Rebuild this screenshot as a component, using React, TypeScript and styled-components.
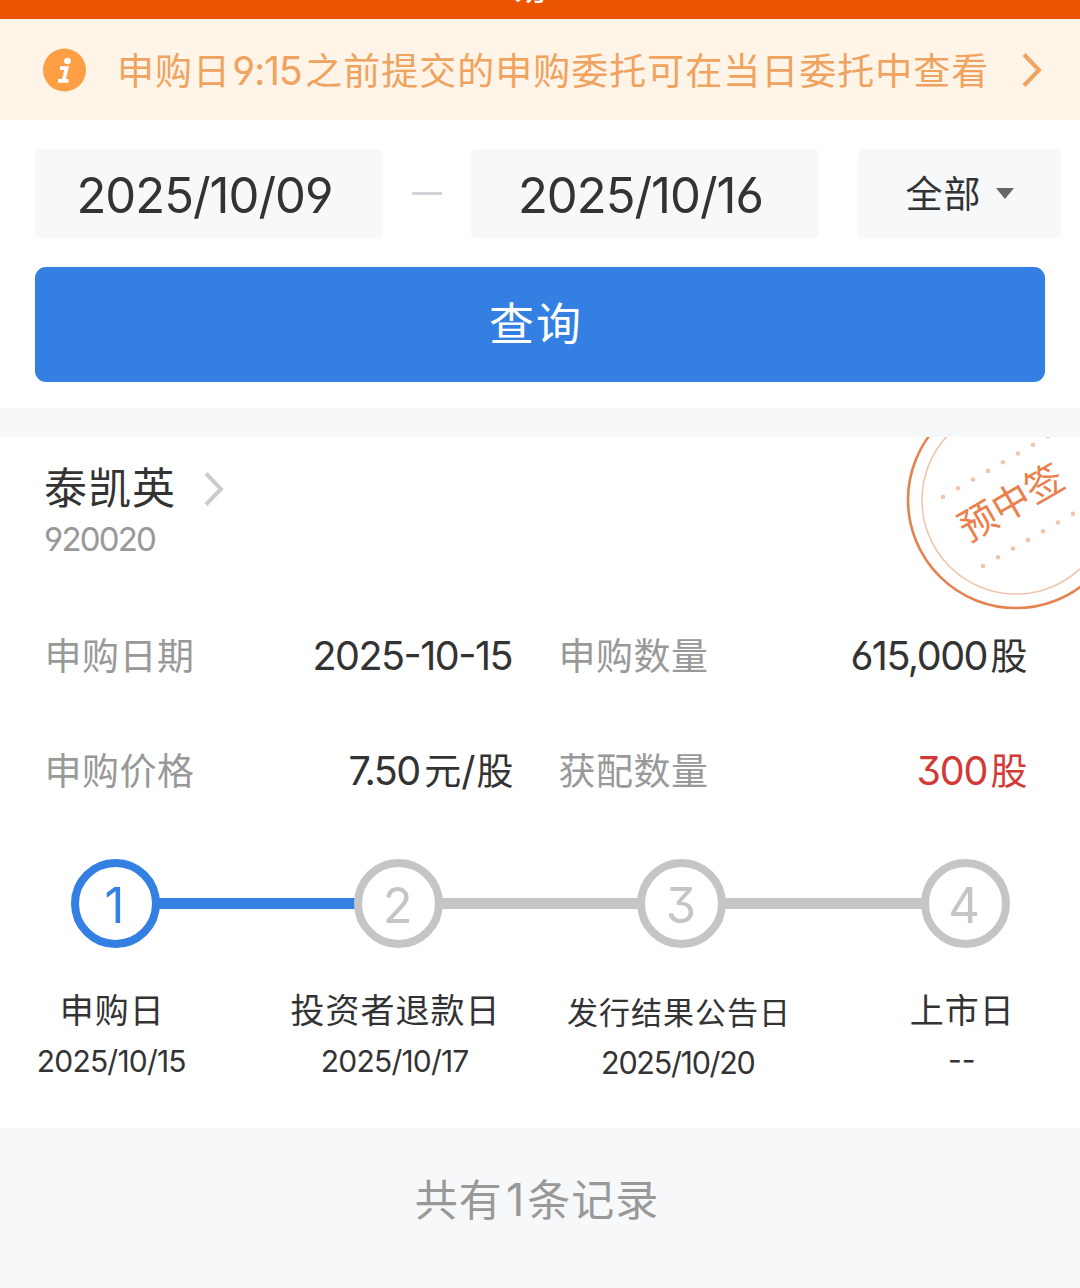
import React from 'react';
import styled, { createGlobalStyle } from 'styled-components';

const Global = createGlobalStyle`
  * { box-sizing: border-box; }
  body { margin: 0; background: #fff; }
`;

const Page = styled.main`
  width: 1080px;
  height: 1288px;
  overflow: hidden;
  display: flex;
  flex-direction: column;
  background: #f7f8fa;
  color: #333;
  font-family: Inter, 'Noto Sans CJK SC', sans-serif;
  font-feature-settings: 'cv03', 'cv04', 'cv09';
  white-space: nowrap;
`;

const Label = styled.span<{ $size: number; $gap?: number; $color?: string }>`
  font-size: ${p => p.$size}px;
  letter-spacing: ${p => p.$gap ?? 1}px;
  margin-right: ${p => -(p.$gap ?? 1)}px;
  line-height: 1.4;
  color: ${p => p.$color ?? 'inherit'};
`;

const Digits = styled.span<{ $size: number; $gap?: number; $color?: string; $after?: number; $case?: boolean }>`
  font-size: ${p => p.$size}px;
  letter-spacing: ${p => p.$gap ?? -1.7}px;
  margin-right: ${p => (p.$after ?? 0) - (p.$gap ?? -1.7)}px;
  line-height: 1.2;
  color: ${p => p.$color ?? 'inherit'};
  ${p => p.$case && "font-feature-settings: 'cv03', 'cv04', 'cv09', 'case';"}
`;

const TitleBar = styled.header`
  height: 19px;
  flex: none;
  display: flex;
  justify-content: center;
  align-items: flex-start;
  padding-right: 20px;
  overflow: hidden;
  background: #eb5500;
  color: #fff;
`;

const Title = styled.span`
  margin-top: -34px;
  font-size: 38px;
  line-height: 38px;
`;

const Banner = styled.section`
  height: 101px;
  flex: none;
  display: flex;
  align-items: center;
  padding: 0 38px 0 43px;
  background: #fff4e8;
  color: #f0a35e;
`;

const BannerText = styled.div`
  flex: 1;
  display: flex;
  align-items: baseline;
  margin-left: 31px;
  padding-top: 5px;
`;

const Filters = styled.section`
  height: 288px;
  flex: none;
  padding: 29px 19px 0 35px;
  background: #fff;
`;

const FilterRow = styled.div`
  display: flex;
  align-items: center;
`;

const Field = styled.button<{ $width: number }>`
  width: ${p => p.$width}px;
  height: 89px;
  padding: 3px 0 0;
  border: 0;
  border-radius: 5px;
  background: #f7f8fa;
  color: #333;
  font: inherit;
  font-feature-settings: inherit;
  display: flex;
  align-items: center;
  justify-content: center;
`;

const DateField = styled(Field)`
  padding: 6px 8px 0 0;
`;

const Dash = styled.i`
  width: 30px;
  height: 3px;
  margin: 0 29px;
  background: #d3d5db;
`;

const Spacer = styled.i`
  width: 39px;
`;

const Caret = styled.i`
  margin: 0 0 3px 15px;
  border: 9px solid transparent;
  border-top: 11px solid #666;
  border-bottom: 0;
`;

const Submit = styled.button`
  width: 1010px;
  height: 115px;
  margin-top: 29px;
  padding: 0 10px 0 0;
  border: 0;
  border-radius: 11px;
  background: #3380e2;
  color: #fff;
  font: inherit;
`;

const Card = styled.section`
  position: relative;
  height: 691px;
  flex: none;
  margin-top: 29px;
  overflow: hidden;
  background: #fff;
`;

const Stock = styled.div`
  padding: 21px 0 0 44px;
`;

const StockName = styled.div`
  display: flex;
  align-items: center;
  gap: 29px;
  height: 61px;
`;

const Code = styled.div`
  height: 42px;
  display: flex;
  align-items: center;
`;

const Stamp = styled.svg`
  position: absolute;
  left: 900px;
  top: 0;
`;

const Facts = styled.dl`
  display: grid;
  grid-template-columns: 469px 469px;
  grid-auto-rows: 115px;
  column-gap: 45px;
  margin: 38px 0 0 44.5px;
`;

const Fact = styled.div`
  display: flex;
  align-items: center;
  justify-content: space-between;
`;

const Value = styled.dd<{ $accent?: boolean }>`
  margin: 0;
  display: flex;
  align-items: baseline;
  color: ${p => (p.$accent ? '#d23a36' : '#333')};
`;

const Track = styled.div`
  display: flex;
  align-items: center;
  margin: 30px 0 0 71px;
`;

const Ring = styled.div<{ $on: boolean }>`
  width: 89px;
  height: 89px;
  padding: 5px 2px 0 0;
  border: 8px solid ${p => (p.$on ? '#3380e2' : '#c5c5c5')};
  border-radius: 50%;
  color: ${p => (p.$on ? '#3380e2' : '#c5c5c5')};
  display: flex;
  align-items: center;
  justify-content: center;
`;

const Bar = styled.i<{ $on: boolean }>`
  width: 198.2px;
  height: 11px;
  margin: 0 -2px;
  background: ${p => (p.$on ? '#3380e2' : '#c5c5c5')};
`;

const Captions = styled.div`
  display: grid;
  grid-template-columns: repeat(4, 283.4px);
  margin: 38px 0 0 -30px;
`;

const Caption = styled.div<{ $drop: number }>`
  display: flex;
  flex-direction: column;
  align-items: center;
  padding-top: ${p => p.$drop}px;
`;

const CaptionLine = styled.div`
  height: 50px;
  display: flex;
  align-items: center;
`;

const Footer = styled.footer`
  height: 145px;
  display: flex;
  align-items: center;
  justify-content: center;
  padding-right: 7px;
  color: #999;
`;

const FooterText = styled.div`
  display: flex;
  align-items: baseline;
`;

const Chevron = ({ color, width }: { color: string; width: number }) => (
  <svg width="20" height="34" viewBox="0 0 20 34" fill="none" stroke={color} strokeWidth={width}>
    <path d="M2 1.5 17 17 2 32.5" />
  </svg>
);

const InfoIcon = () => (
  <svg width="43" height="44" viewBox="0 0 43 44">
    <ellipse cx="21.5" cy="22" rx="21.5" ry="21.5" fill="#ff9f45" />
    <circle cx="24.5" cy="13" r="3.3" fill="#fff" />
    <path d="M17 20.2h6.6l-3 12.5M15 32.8h10.5" fill="none" stroke="#fff" strokeWidth="3.8" />
  </svg>
);

const dots = [0, 1, 2, 3, 4, 5, 6, 7];

const steps = [
  { name: '申购日', date: '2025/10/15', size: 34, dateSize: 30, dateGap: -0.8, drop: 0 },
  { name: '投资者退款日', date: '2025/10/17', size: 34, dateSize: 30, dateGap: -0.8, drop: 0 },
  { name: '发行结果公告日', date: '2025/10/20', size: 31, dateSize: 30.5, dateGap: -1.3, drop: 2 },
  { name: '上市日', date: '--', size: 34, dateSize: 30, dateGap: 0, drop: 0 },
];

export default function App() {
  return (
    <Page>
      <Global />
      <TitleBar><Title>易</Title></TitleBar>
      <Banner>
        <InfoIcon />
        <BannerText>
          <Label $size={37}>申购日</Label>
          <Digits $size={39.5} $gap={-1.3} $after={2.5}>&#8202;9:15</Digits>
          <Label $size={37}>之前提交的申购委托可在当日委托中查看</Label>
        </BannerText>
        <Chevron color="#f0a35e" width={4} />
      </Banner>

      <Filters>
        <FilterRow>
          <DateField $width={348}><Digits $size={49} $gap={-1}>2025/10/09</Digits></DateField>
          <Dash />
          <DateField $width={348}><Digits $size={49} $gap={-1}>2025/10/16</Digits></DateField>
          <Spacer />
          <Field $width={203}><Label $size={37}>全部</Label><Caret /></Field>
        </FilterRow>
        <Submit><Label $size={45} $gap={2}>查询</Label></Submit>
      </Filters>

      <Card>
        <Stock>
          <StockName><Label $size={43}>泰凯英</Label><Chevron color="#ccc" width={4} /></StockName>
          <Code><Digits $size={33}  $gap={-1.8} $color="#999">920020</Digits></Code>
        </Stock>
        <Stamp width="180" height="180" viewBox="0 0 180 180" fill="none">
          <circle cx="116" cy="63" r="108" stroke="#e58350" strokeWidth="2.6" />
          <circle cx="116" cy="63" r="94" stroke="#efc5ae" strokeWidth="1.6" />
          {dots.map(i => (
            <React.Fragment key={i}>
              <circle cx={43 + i * 15} cy={60 - i * 8.7} r="2.3" fill="#efc5ae" />
              <circle cx={83 + i * 15} cy={129 - i * 8.7} r="2.3" fill="#efc5ae" />
            </React.Fragment>
          ))}
          <text x="111" y="65" transform="rotate(-30 111 65)" textAnchor="middle" dominantBaseline="central" fontSize="38" fill="#ea804c">预中签</text>
        </Stamp>

        <Facts>
          <Fact><Label as="dt" $size={37} $gap={0.5} $color="#999">申购日期</Label><Value><Digits $size={39.5} $gap={-1.5} $case>2025-10-15</Digits></Value></Fact>
          <Fact><Label as="dt" $size={37} $gap={0.5} $color="#999">申购数量</Label><Value><Digits $size={39.5} $gap={-1.5} $after={2}>615,000</Digits><Label $size={37}>股</Label></Value></Fact>
          <Fact><Label as="dt" $size={37} $gap={0.5} $color="#999">申购价格</Label><Value><Digits $size={39.5} $gap={-1.5} $after={3}>7.50</Digits><Label $size={37}>元</Label><Digits $size={39.5} $after={1}>/</Digits><Label $size={37}>股</Label></Value></Fact>
          <Fact><Label as="dt" $size={37} $gap={0.5} $color="#999">获配数量</Label><Value $accent><Digits $size={39.5} $gap={-1.2} $after={2}>300</Digits><Label $size={37}>股</Label></Value></Fact>
        </Facts>

        <Track>
          {steps.map((s, i) => (
            <React.Fragment key={s.name}>
              {i > 0 && <Bar $on={i === 1} />}
              <Ring $on={i === 0}><Digits $size={49} $gap={0}>{i + 1}</Digits></Ring>
            </React.Fragment>
          ))}
        </Track>
        <Captions>
          {steps.map(s => (
            <Caption key={s.name} $drop={s.drop}>
              <CaptionLine><Label $size={s.size}>{s.name}</Label></CaptionLine>
              <CaptionLine><Digits $size={s.dateSize} $gap={s.dateGap} $case={s.date === '--'}>{s.date}</Digits></CaptionLine>
            </Caption>
          ))}
        </Captions>
      </Card>

      <Footer>
        <FooterText>
          <Label $size={43}>共有</Label><Digits $size={45} $gap={0} $after={3}>&#8202;1</Digits><Label $size={43}>条记录</Label>
        </FooterText>
      </Footer>
    </Page>
  );
}
